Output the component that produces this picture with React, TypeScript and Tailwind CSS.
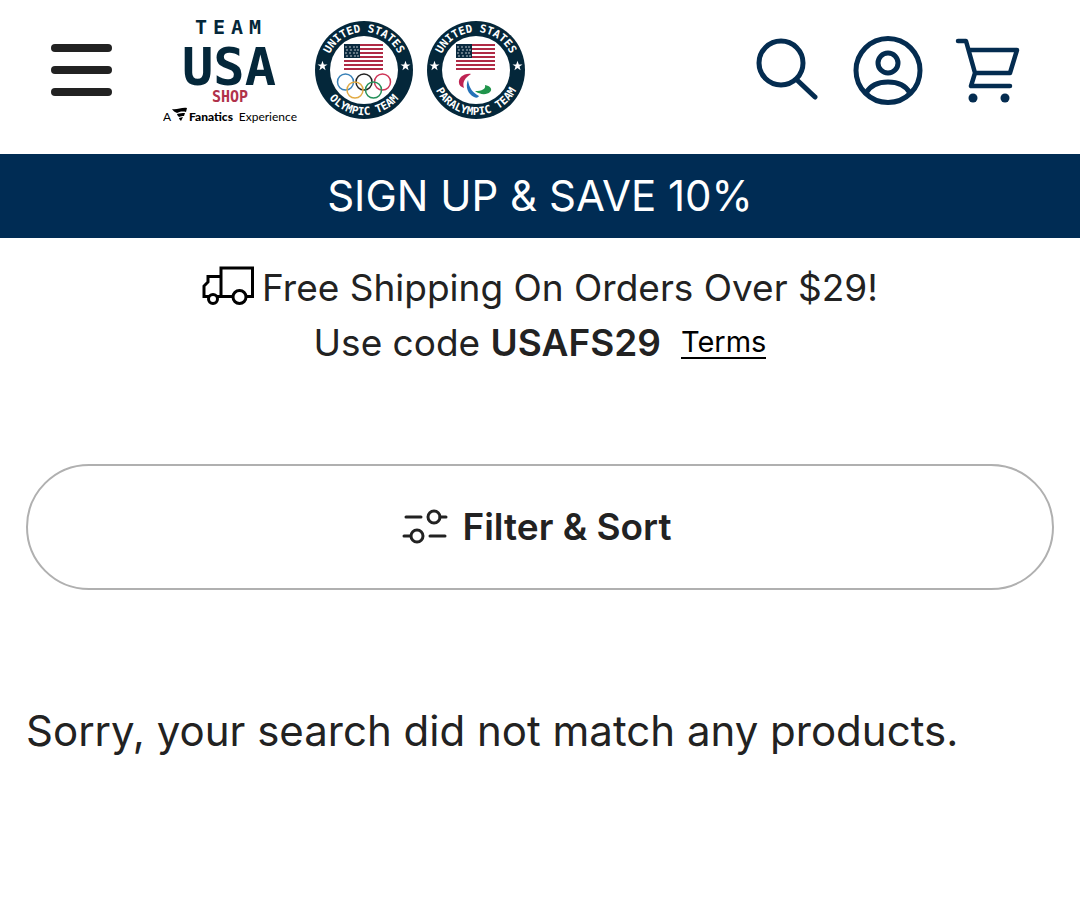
const stripes = [0, 1, 2, 3, 4, 5, 6];

function Flag() {
  return (
    <g transform="translate(29 23)">
      <rect width="39" height="26" fill="#fff" />
      {stripes.map((i) => (
        <rect key={i} y={i * 4} width="39" height="2" fill="#b02a45" />
      ))}
      <rect width="16" height="14" fill="#0a2a3f" />
      {[2, 5, 8, 11].map((y) =>
        [2, 6, 10, 13].map((x) => (
          <circle key={`${x}-${y}`} cx={x + (y % 2)} cy={y + 1} r="0.7" fill="#fff" />
        ))
      )}
    </g>
  );
}

function Badge({ id, bottom, label, children }: { id: string; bottom: string; label: string; children: React.ReactNode }) {
  const star = "M0-5.2 1.3-1.6H5L2 .6 3.1 4.2 0 2-3.1 4.2-2 .6-5-1.6H-1.3Z";
  return (
    <svg viewBox="0 0 98 98" className="size-[98px] shrink-0" role="img" aria-label={label}>
      <defs>
        <path id={`${id}-top`} d="M11 49a38 38 0 0 1 76 0" />
        <path id={`${id}-bottom`} d="M4 49a45 45 0 0 0 90 0" />
      </defs>
      <circle cx="49" cy="49" r="49" fill="#04273a" />
      <circle cx="49" cy="49" r="34" fill="#fff" />
      <g fill="#fff" fontFamily="'DejaVu Sans Mono', monospace" fontWeight="700" fontSize="11" textAnchor="middle">
        <text>
          <textPath href={`#${id}-top`} startOffset="50%">UNITED STATES</textPath>
        </text>
        <text>
          <textPath href={`#${id}-bottom`} startOffset="50%">{bottom}</textPath>
        </text>
      </g>
      <path d={star} transform="translate(7.500 45)" fill="#fff" />
      <path d={star} transform="translate(90.500 45)" fill="#fff" />
      <Flag />
      {children}
    </svg>
  );
}

function TeamUsaLogo() {
  return (
    <svg viewBox="0 0 134 108" className="h-[108px] w-[134px] shrink-0" role="img" aria-label="Team USA Shop">
      <g fontFamily="'DejaVu Sans Mono', monospace" fontWeight="700" textAnchor="middle">
        <text x="68" y="18" fontSize="20" fill="#04273a" className="tracking-[6px]">TEAM</text>
        <text x="66" y="69" fontSize="52" fill="#04273a">USA</text>
        <text x="67" y="86" fontSize="15" fill="#b0324a">SHOP</text>
      </g>
      <g fontFamily="Lato, sans-serif" fontSize="12" fill="#000">
        <text x="0" y="105">A</text>
        <text x="26" y="105" fontWeight="900">Fanatics</text>
        <text x="134" y="105" textAnchor="end">Experience</text>
      </g>
      <path d="M9 93c5 1 10-2 15-1l-1 4c-4-1-7 0-9 1-2-1-4-2-5-4ZM14 98c3-1 5-1 8-1l-1 3c-2 0-3 0-5 1-1-1-2-2-2-3ZM16 102l4-1-2 4c-1-1-2-2-2-3Z" />
    </svg>
  );
}

function OlympicRings() {
  return (
    <g fill="none" strokeWidth="1.5">
      <circle cx="30.500" cy="61" r="8" stroke="#3b82b8" />
      <circle cx="49" cy="61" r="8" stroke="#222" />
      <circle cx="67.500" cy="61" r="8" stroke="#cf3558" />
      <circle cx="40" cy="69" r="8" stroke="#e2ab45" />
      <circle cx="58.500" cy="69" r="8" stroke="#25905a" />
    </g>
  );
}

function Agitos() {
  return (
    <g>
      <path d="M44 53c-7-1-13 4-12 9 0 2 2 4 5 5-2-6 1-10 7-14Z" fill="#bf2453" />
      <path d="M41 59c-3 7 0 14 6 17 2 1 4 1 5-1-6-3-10-8-11-16Z" fill="#2572b8" />
      <path d="M48 70c5 4 12 4 15 1 3-3 0-6-5-7 1 4-3 6-10 6Z" fill="#20944b" />
    </g>
  );
}

export default function App() {
  return (
    <div className="min-h-screen bg-white font-[Inter,sans-serif] text-[#222]">
      {/* Header */}
      <header className="flex items-center justify-between pt-4 pr-[60px] pb-[30px] pl-[51px]">
        <div className="flex items-center">
          <button type="button" aria-label="Open menu" className="flex w-[61px] flex-col gap-[14px]">
            <span className="h-2 w-full rounded-full bg-[#222]" />
            <span className="h-2 w-full rounded-full bg-[#222]" />
            <span className="h-2 w-full rounded-full bg-[#222]" />
          </button>
          <a href="#" className="ml-[51px] flex items-center">
            <TeamUsaLogo />
            <span className="ml-[18px] flex gap-[14px]">
              <Badge id="olympic" label="United States Olympic Team" bottom="OLYMPIC TEAM">
                <OlympicRings />
              </Badge>
              <Badge id="paralympic" label="United States Paralympic Team" bottom="PARALYMPIC TEAM">
                <Agitos />
              </Badge>
            </span>
          </a>
        </div>

        <div className="flex items-center gap-[34px] text-[#042c50]">
          <button type="button" aria-label="Search">
            <svg viewBox="0 0 64 64" className="size-16" fill="none" stroke="currentColor" strokeWidth="5" strokeLinecap="round">
              <circle cx="27" cy="25" r="22" />
              <path d="m43 42 18 17" />
            </svg>
          </button>
          <button type="button" aria-label="Account">
            <svg viewBox="0 0 70 70" className="size-[70px] overflow-visible" fill="none" stroke="currentColor" strokeWidth="5">
              <circle cx="36" cy="35.500" r="32" />
              <circle cx="36" cy="28" r="10" />
              <path d="M14 58c4-7 12-11 22-11s18 4 22 11" />
            </svg>
          </button>
          <button type="button" aria-label="Cart">
            <svg viewBox="0 0 64 64" className="size-16 overflow-visible" fill="none" stroke="currentColor" strokeWidth="4.500" strokeLinecap="round" strokeLinejoin="round">
              <path d="M2 3h8l9 32-4 13h39M13 12h48l-7 23H19" />
              <circle cx="17" cy="60" r="4.500" fill="currentColor" stroke="none" />
              <circle cx="49" cy="60" r="4.500" fill="currentColor" stroke="none" />
            </svg>
          </button>
        </div>
      </header>

      {/* Sign up banner */}
      <a href="#" className="block bg-[#002c54] text-center text-[42px] leading-[84px] text-white">
        SIGN UP &amp; SAVE 10%
      </a>

      {/* Shipping promo */}
      <section className="pt-[22px] text-center text-[37px] leading-[55px]">
        <p className="flex items-center justify-center gap-2">
          <svg viewBox="0 0 52 48" className="h-12 w-[52px]" fill="none" stroke="#000" strokeWidth="3">
            <path d="M7 32.500H2V22l4-4v-5.500h13M19 32.500V4h31.500v28.500H44M15 32.500h16" />
            <circle cx="11" cy="35" r="4.500" fill="#fff" />
            <circle cx="37.500" cy="33" r="6.500" fill="#fff" />
          </svg>
          <span>Free Shipping On Orders Over $29!</span>
        </p>
        <p className="flex items-center justify-center">
          <span>Use code <strong className="font-semibold">USAFS29</strong></span>
          <a href="#" className="ml-5 border-b-2 border-black text-[29px] leading-[30px] text-black">Terms</a>
        </p>
      </section>

      {/* Results */}
      <main className="px-[26px] pt-[94px]">
        <button type="button" className="flex h-[126px] w-full items-center justify-center gap-[14px] rounded-full border-2 border-[#b0b0b0] pr-1.5 text-[37px] font-semibold">
          <svg viewBox="0 0 46 36" className="h-9 w-[46px]" fill="none" stroke="currentColor" strokeWidth="3" strokeLinecap="round">
            <path d="M4 8h15M38 8h6M2 27h6M28 27h15" />
            <circle cx="32" cy="8" r="6" />
            <circle cx="15" cy="27" r="6" />
          </svg>
          Filter &amp; Sort
        </button>
        <p className="pt-[114px] text-[42px] leading-[54px]">Sorry, your search did not match any products.</p>
      </main>
    </div>
  );
}
